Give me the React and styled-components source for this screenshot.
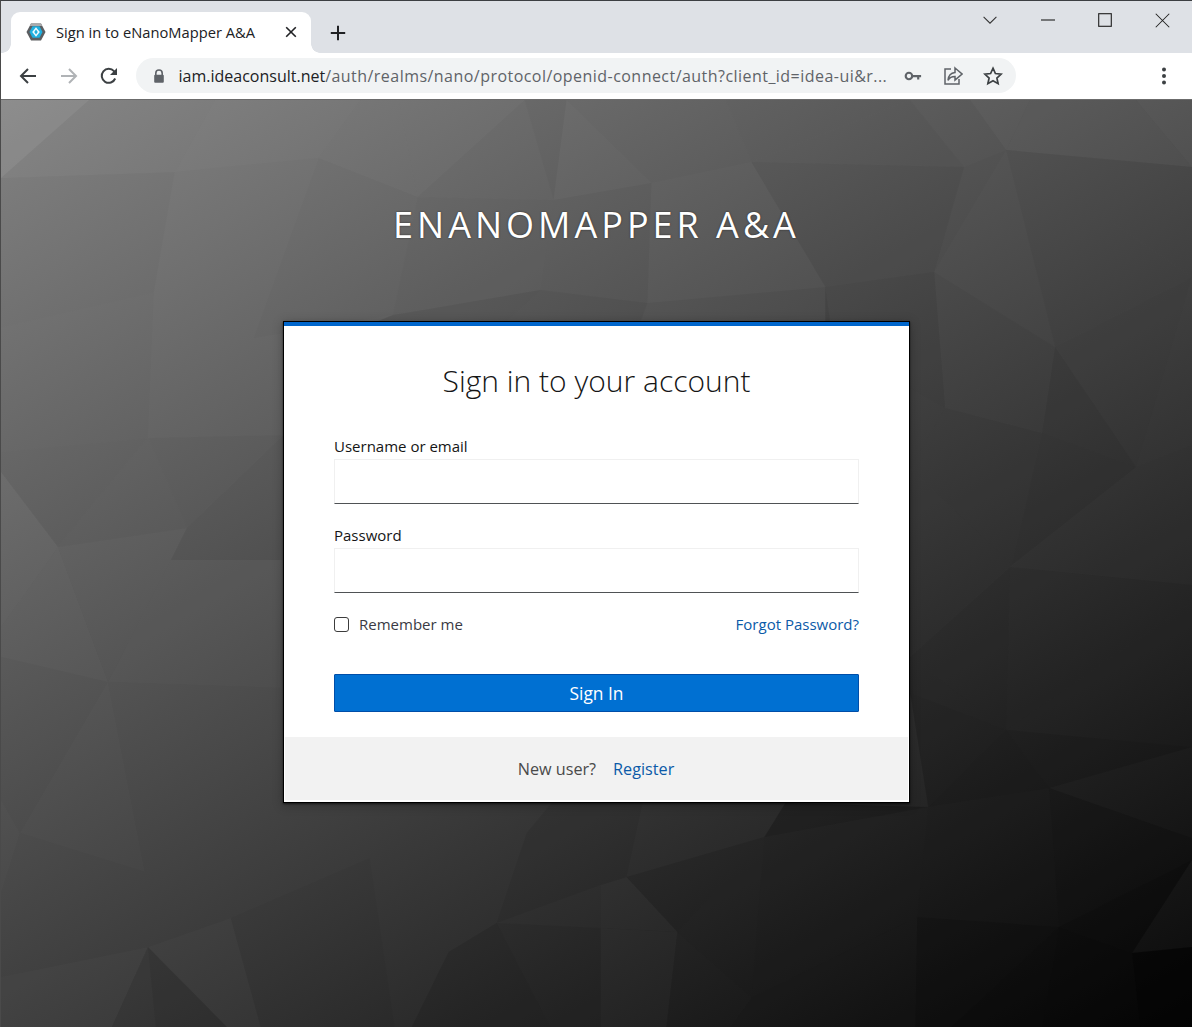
import React from 'react';
import styled, { createGlobalStyle } from 'styled-components';

const GlobalStyle = createGlobalStyle`
    html, body {
        margin: 0;
        height: 100%;
        overflow: hidden;
        background: #000;
    }
    body {
        font-family: "Open Sans", "Liberation Sans", sans-serif;
    }
`;

// low-poly backdrop: [points in page coords, shade offset from the base gradient]
const FACETS = [
    ['0,100 88,100 0,178', 12], ['88,100 214,100 174,172 0,178', 2], ['214,100 360,100 318,158 174,172', 3],
    ['0,178 174,172 153,293 0,328', -3], ['318,158 417,197 392,315 253,338', -2], ['360,100 398,100 417,197 318,158', 2],
    ['398,100 524,100 417,197', 2], ['524,100 553,200 417,197', -2], ['524,100 566,100 553,200', -6],
    ['566,100 636,100 651,183', -2], ['636,100 725,100 651,183', -2], ['725,100 751,162 651,183', -2],
    ['725,100 910,100 751,162', -3], ['910,100 964,167 751,162', -3], ['970,100 1030,100 1006,150', 6],
    ['1030,100 1136,100 1192,167 1006,150', 5], ['1136,100 1192,100 1192,167', 8], ['1006,150 1192,167 1192,277', -3],
    ['1006,150 1192,277 1055,347', -3], ['964,167 1006,150 934,272', -2], ['751,162 964,167 934,272 825,287', -7],
    ['651,183 751,162 647,303', 1], ['825,287 934,272 945,408 825,340', -10], ['825,340 945,408 910,468 825,468', -8],
    ['934,272 1055,347 945,408', -3], ['945,408 1055,347 1042,433', -3], ['1055,347 1192,277 1136,467', -4],
    ['1055,347 1136,467 1042,433', -8], ['1192,277 1192,445 1136,467', -2], ['945,408 1042,433 1012,565 910,468', -7],
    ['1042,433 1136,467 1012,565', -8], ['1136,467 1192,445 1192,585 1010,567', -3], ['1010,567 1192,585 1192,602 1006,730', -6],
    ['910,657 1010,567 1006,730', -8], ['910,657 1006,730 910,693', -8], ['910,468 1012,565 910,657', -6],
    ['1006,730 1192,602 1192,747', -5], ['1006,730 1192,747 1049,788', -8], ['910,693 1006,730 928,807', -9],
    ['1006,730 1049,788 928,807', -10], ['1049,788 1192,747 1192,838', -2], ['1049,788 1192,838 1192,860 1059,927', -7],
    ['928,807 1049,788 1059,927 917,917', -6], ['1059,927 1192,860 1132,953', -8], ['1132,953 1192,860 1192,947', 2],
    ['1132,953 1192,947 1192,1027 1140,1027', -9], ['1059,927 1132,953 1140,1027 1042,1027', -8], ['917,917 1059,927 951,1027 915,1027', -8],
    ['1059,927 1042,1027 951,1027', -8], ['751,998 917,917 915,1027 730,1027', -5], ['764,837 928,807 917,917 751,998', -6],
    ['785,803 928,807 764,837', -12], ['626,877 764,837 677,932', -6], ['764,837 751,998 677,932', -5],
    ['600,885 626,877 677,932 600,928', 3], ['600,928 677,932 666,1027 600,1027', 3], ['677,932 751,998 730,1027 666,1027', -3],
    ['0,452 147,438 57,547 0,472', -3], ['0,472 57,547 48,560 0,627', 6], ['147,438 186,528 57,547', -2],
    ['147,438 283,435 186,528', -3], ['153,293 253,338 147,438', 1], ['0,328 153,293 147,438 0,452', -2],
    ['186,528 283,435 283,560 170,560', -6], ['57,547 186,528 170,560 107,682', 2], ['48,560 57,547 107,682 0,657 0,627', 4],
    ['170,560 283,560 281,688 107,682', 3], ['107,682 144,872 19,833', 3], ['0,800 19,833 0,893', 3],
    ['0,893 19,833 144,872 147,947 0,977', 1], ['144,872 281,803 302,803 230,918 147,947', 1], ['230,918 369,858 394,1027 260,1027', -2],
    ['147,947 230,918 260,1027 226,1027', 4], ['147,947 226,1027 155,1027', -8], ['147,947 155,1027 111,1027', -4],
    ['0,977 147,947 111,1027 0,1027', 4], ['448,952 496,923 550,1027 411,1027', -6], ['496,923 600,928 600,1027 550,1027', -3],
    ['526,833 551,803 642,803 626,877 600,885 496,923', -4], ['417,197 553,200 540,290 392,315', -4], ['553,200 651,183 647,303 540,290', -5],
    ['392,315 540,290 505,322 375,322', -12], ['540,290 647,303 640,322 505,322', -10], ['647,303 825,287 830,322 640,322', -5],
];

const facetFill = ([points, shade]) => {
    const pairs = points.split(' ').map((p) => p.split(',').map(Number));
    const cx = pairs.reduce((sum, p) => sum + p[0], 0) / pairs.length;
    const cy = pairs.reduce((sum, p) => sum + p[1], 0) / pairs.length;
    const grey = Math.max(8, 141 - 0.045 * cx - 0.077 * cy);
    const soft = shade * 0.75; // the edges in the picture are faint
    return {
        fill: soft > 0 ? '#fff' : '#000',
        fillOpacity: soft > 0 ? soft / (255 - grey) : -soft / grey,
    };
};

const Page = styled.div`
    width: 100%;
    height: 100vh;
    display: flex;
    flex-direction: column;
    background: #fff;
    box-sizing: border-box;
    border-top: 1px solid #3c3f42;
    border-left: 1px solid #4a4a4a;
`;

const TitleBar = styled.div`
    height: 52px;
    flex: none;
    display: flex;
    align-items: flex-end;
    background: #dee1e6;
    padding-left: 10px;
`;

const Tab = styled.div`
    position: relative;
    width: 300px;
    height: 41px;
    display: flex;
    align-items: center;
    box-sizing: border-box;
    padding: 0 12px 1px 15px;
    background: #fff;
    border-radius: 9px 9px 0 0;

    &::before,
    &::after {
        content: '';
        position: absolute;
        bottom: 0;
        width: 9px;
        height: 9px;
    }
    &::before {
        left: -9px;
        background: radial-gradient(circle at 0 0, #dee1e6 8.5px, #fff 9px);
    }
    &::after {
        right: -9px;
        background: radial-gradient(circle at 100% 0, #dee1e6 8.5px, #fff 9px);
    }
`;

const TabTitle = styled.span`
    flex: 1;
    margin-left: 10px;
    font-size: 14.7px;
    color: #202124;
    white-space: nowrap;
`;

const NewTab = styled.div`
    width: 30px;
    height: 41px;
    margin-left: 12px;
    display: flex;
    align-items: center;
    justify-content: center;
`;

const WindowControls = styled.div`
    margin-left: auto;
    margin-right: 1px;
    align-self: flex-start;
    display: flex;
`;

const WindowButton = styled.div`
    width: 57.4px;
    height: 38px;
    display: flex;
    align-items: center;
    justify-content: center;
`;

const Toolbar = styled.div`
    height: 47px;
    flex: none;
    display: flex;
    align-items: center;
    box-sizing: border-box;
    padding: 0 8px 1px 7px;
    background: #fff;
    border-bottom: 1px solid #6b6b6b;
`;

const NavButton = styled.div`
    width: 40.5px;
    height: 36px;
    display: flex;
    align-items: center;
    justify-content: center;
`;

const Omnibox = styled.div`
    width: 880px;
    height: 35px;
    margin-left: 6px;
    display: flex;
    align-items: center;
    box-sizing: border-box;
    padding: 0 3px 0 15px;
    background: #f1f3f4;
    border-radius: 18px;
`;

const Url = styled.span`
    flex: 1;
    margin-left: 12px;
    font-size: 16px;
    letter-spacing: 0.46px;
    color: #5f6368;
    white-space: nowrap;
    overflow: hidden;
`;

const Host = styled.span`
    letter-spacing: 0;
    color: #202124;
`;

const OmniIcon = styled.div`
    width: 40px;
    display: flex;
    justify-content: center;
`;

const Kebab = styled.div`
    margin-left: auto;
    width: 40px;
    display: flex;
    justify-content: center;
`;

const LoginArea = styled.main`
    position: relative;
    flex: 1;
    display: flex;
    flex-direction: column;
    align-items: center;
    overflow: hidden;
    padding-top: 100px;
`;

const Backdrop = styled.svg`
    position: absolute;
    inset: 0;
    width: 100%;
    height: 100%;
`;

const Realm = styled.h1`
    position: relative;
    margin: 0;
    font-size: 36px;
    line-height: 50px;
    font-weight: 400;
    letter-spacing: 4px;
    color: #fff;
    text-shadow: 0 0 2px rgba(0, 0, 0, 0.6);
    white-space: nowrap;
`;

const Card = styled.section`
    position: relative;
    width: 625px;
    height: 480px;
    margin-top: 72px;
    box-sizing: border-box;
    display: flex;
    flex-direction: column;
    background: #fff;
    border-top: 4px solid #0066cc;
    box-shadow: 0 0 0 1px #000, 0 1px 2px 1px rgba(0, 0, 0, 0.6), 0 2px 10px 2px rgba(0, 0, 0, 0.2);
`;

const CardBody = styled.form`
    flex: 1;
    display: flex;
    flex-direction: column;
    padding: 0 50px;
`;

const Heading = styled.h2`
    margin: 33px 0 0;
    font-size: 30px;
    line-height: 44px;
    font-weight: 300;
    text-align: center;
    color: #151515;
`;

const Label = styled.label`
    display: block;
    margin-top: ${(props) => props.$top}px;
    font-size: 15px;
    line-height: 22px;
    color: #151515;
`;

const TextInput = styled.input`
    display: block;
    width: 100%;
    height: 45px;
    margin-top: 2px;
    box-sizing: border-box;
    background: #fff;
    border: 1px solid #f0f0f0;
    border-bottom-color: #4f5255;
    outline: none;
`;

const OptionsRow = styled.div`
    margin-top: 20px;
    display: flex;
    align-items: center;
    justify-content: space-between;
    height: 22px;
`;

const Remember = styled.label`
    display: flex;
    align-items: center;
    font-size: 15px;
    color: #3a3a44;
`;

const Checkbox = styled.input`
    appearance: none;
    width: 15px;
    height: 15px;
    margin: 0 10px 0 0;
    background: #fff;
    border: 1px solid #3c3c3c;
    border-radius: 3px;
`;

const TextLink = styled.a`
    font-size: ${(props) => props.$size}px;
    color: #0b5aa8;
    text-decoration: none;
`;

const SubmitButton = styled.button`
    width: 100%;
    height: 38px;
    margin-top: 39px;
    padding: 0 0 1px;
    font-family: inherit;
    font-size: 17.4px;
    font-weight: 500;
    color: #fff;
    background: #0070d2;
    border: 1px solid #004ea8;
    border-radius: 1px;
`;

const CardFooter = styled.div`
    height: 63px;
    margin: 0 1px 2px;
    padding-right: 1px;
    display: flex;
    align-items: center;
    justify-content: center;
    gap: 17px;
    background: #f2f2f2;
    font-size: 16.2px;
    color: #4a4a4a;
`;

const Icon = ({ size = 20, children, ...rest }) => (
    <svg width={size} height={size} viewBox="0 0 20 20" fill="none" {...rest}>
        {children}
    </svg>
);

const Favicon = () => (
    <svg width="20" height="18" viewBox="0 0 20 18">
        <path d="M5 0.5h10l4.5 8.5-4.5 8.5H5L0.5 9z" fill="#5c5e61" />
        <path d="M5 0.5h10l1.2 2.5H3.8z" fill="#a9abad" />
        <path d="M6.5 3.2h7l3 5.8-3 5.8h-7l-3-5.8z" fill="#1fb0e0" />
        <path d="M10 4.2L6.2 9 10 13.8 13.8 9z" fill="#f2fbff" />
        <path d="M10 6.6L8.2 9 10 11.4 11.8 9z" fill="#1fb0e0" />
    </svg>
);

const App = () => (
    <Page>
        <GlobalStyle />
        <TitleBar>
            <Tab>
                <Favicon />
                <TabTitle>Sign in to eNanoMapper A&amp;A</TabTitle>
                <Icon size={16}>
                    <path d="M4 4l12 12M16 4L4 16" stroke="#202124" strokeWidth="2" />
                </Icon>
            </Tab>
            <NewTab>
                <Icon size={18}>
                    <path d="M10 2v16M2 10h16" stroke="#202124" strokeWidth="2.2" />
                </Icon>
            </NewTab>
            <WindowControls>
                <WindowButton>
                    <Icon size={16}>
                        <path d="M2 6l8 8 8-8" stroke="#333" strokeWidth="1.3" />
                    </Icon>
                </WindowButton>
                <WindowButton>
                    <Icon size={14}>
                        <path d="M0 10h20" stroke="#222" strokeWidth="1.6" />
                    </Icon>
                </WindowButton>
                <WindowButton>
                    <Icon size={14}>
                        <rect x="1" y="1" width="18" height="18" stroke="#222" strokeWidth="1.6" />
                    </Icon>
                </WindowButton>
                <WindowButton>
                    <Icon size={15}>
                        <path d="M1 1l18 18M19 1L1 19" stroke="#222" strokeWidth="1.4" />
                    </Icon>
                </WindowButton>
            </WindowControls>
        </TitleBar>
        <Toolbar>
            <NavButton>
                <Icon>
                    <path d="M18 10H3M10 3l-7 7 7 7" stroke="#3c4043" strokeWidth="2" />
                </Icon>
            </NavButton>
            <NavButton>
                <Icon>
                    <path d="M2 10h15M10 3l7 7-7 7" stroke="#b0b3b6" strokeWidth="2" />
                </Icon>
            </NavButton>
            <NavButton>
                <Icon>
                    <path d="M16.2 12.5A7 7 0 1 1 15 5.2L17 7" stroke="#3c4043" strokeWidth="2" />
                    <path d="M18 2v7h-7z" fill="#3c4043" />
                </Icon>
            </NavButton>
            <Omnibox>
                <Icon size={16}>
                    <path d="M6 9V6.5a4 4 0 0 1 8 0V9" stroke="#5f6368" strokeWidth="2" />
                    <rect x="4" y="8.5" width="12" height="10" rx="1.2" fill="#5f6368" />
                </Icon>
                <Url>
                    <Host>iam.ideaconsult.net</Host>/auth/realms/nano/protocol/openid-connect/auth?client_id=idea-ui&amp;r...
                </Url>
                <OmniIcon>
                    <Icon size={18}>
                        <circle cx="5.5" cy="10" r="3.6" stroke="#5f6368" strokeWidth="2.4" />
                        <path d="M9 8.8h10v2.6h-2v2.4h-2.4v-2.4H9z" fill="#5f6368" />
                    </Icon>
                </OmniIcon>
                <OmniIcon>
                    <Icon>
                        <path d="M8 3H2v15h14v-5" stroke="#5f6368" strokeWidth="1.5" />
                        <path d="M12 2l7 6-7 6v-3.4c-3.5 0-5.6 1.2-7 3.8 0.4-4.6 2.8-7.4 7-7.8z" stroke="#5f6368" strokeWidth="1.5" fill="#f1f3f4" />
                    </Icon>
                </OmniIcon>
                <OmniIcon>
                    <Icon>
                        <path d="M10 2.2l2.4 5.3 5.8.6-4.3 3.9 1.2 5.7-5.1-2.9-5.1 2.9 1.2-5.7-4.3-3.9 5.8-.6z" stroke="#3c4043" strokeWidth="1.7" />
                    </Icon>
                </OmniIcon>
            </Omnibox>
            <Kebab>
                <Icon>
                    <circle cx="10" cy="3.5" r="2" fill="#3c4043" />
                    <circle cx="10" cy="10" r="2" fill="#3c4043" />
                    <circle cx="10" cy="16.5" r="2" fill="#3c4043" />
                </Icon>
            </Kebab>
        </Toolbar>
        <LoginArea>
            <Backdrop viewBox="0 100 1192 927" preserveAspectRatio="none">
                <defs>
                    <linearGradient id="base" gradientUnits="userSpaceOnUse" x1="0" y1="100" x2="724" y2="1339">
                        <stop offset="0" stopColor="#858585" />
                        <stop offset="1" stopColor="#050505" />
                    </linearGradient>
                </defs>
                <rect x="0" y="100" width="1192" height="927" fill="url(#base)" />
                {FACETS.map((facet) => (
                    <polygon key={facet[0]} points={facet[0]} {...facetFill(facet)} />
                ))}
            </Backdrop>
            <Realm>ENANOMAPPER A&amp;A</Realm>
            <Card>
                <CardBody onSubmit={(e) => e.preventDefault()}>
                    <Heading>Sign in to your account</Heading>
                    <Label $top={32} htmlFor="username">Username or email</Label>
                    <TextInput id="username" type="text" />
                    <Label $top={20} htmlFor="password">Password</Label>
                    <TextInput id="password" type="password" />
                    <OptionsRow>
                        <Remember>
                            <Checkbox type="checkbox" />
                            Remember me
                        </Remember>
                        <TextLink $size={15} href="#forgot">Forgot Password?</TextLink>
                    </OptionsRow>
                    <SubmitButton type="submit">Sign In</SubmitButton>
                </CardBody>
                <CardFooter>
                    <span>New user?</span>
                    <TextLink $size={16.2} href="#register">Register</TextLink>
                </CardFooter>
            </Card>
        </LoginArea>
    </Page>
);

export default App;
